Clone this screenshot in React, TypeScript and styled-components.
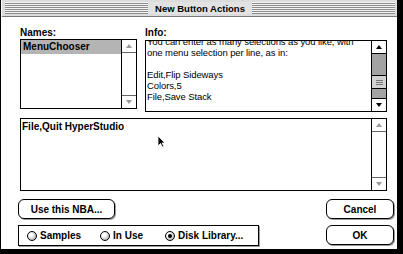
import React from 'react';
import styled, { createGlobalStyle } from 'styled-components';

const GlobalStyle = createGlobalStyle`
  html, body {
    margin: 0;
    padding: 0;
    background: #fff;
  }
  body {
    width: 403px;
    height: 254px;
    overflow: hidden;
    font-family: "Liberation Sans", Arial, sans-serif;
    color: #000;
  }
`;

const Screen = styled.div`
  position: relative;
  width: 403px;
  height: 254px;
  overflow: hidden;
  background: #fff;
`;

const Window = styled.div`
  box-sizing: border-box;
  width: 403px;
  height: 254px;
  border-left: 1px solid #000;
  border-right: 6px solid #000;
  border-bottom: 5px solid #000;
  background: #fff;
  display: flex;
  flex-direction: column;
`;

const TitleBar = styled.div`
  height: 17px;
  box-sizing: border-box;
  padding: 2px 2px 2px 3px;
  margin-left: 1px;
  background: #dcdcdc;
  border-bottom: 1px solid #7a7a7a;
  display: flex;
  align-items: stretch;
`;

const Stripes = styled.div`
  flex: 1;
  background: repeating-linear-gradient(
    to bottom,
    #f4f4f4 0 1px,
    #8c8c8c 1px 2px
  );
`;

const Title = styled.div`
  padding: 0 7px;
  font-size: 9.5px;
  font-weight: bold;
  line-height: 13px;
  background: #e2e2e2;
`;

const Body = styled.div`
  flex: 1;
  padding: 10px 0 0 19px;
  display: flex;
  flex-direction: column;
`;

const TopGrid = styled.div`
  display: grid;
  grid-template-columns: 117px 242px;
  column-gap: 8px;
  align-items: start;
`;

const Field = styled.div`
  display: flex;
  flex-direction: column;
`;

const Label = styled.div`
  height: 12px;
  font-size: 10px;
  font-weight: bold;
  line-height: 12px;
`;

const Box = styled.div<{ $h: number; $offset?: number }>`
  box-sizing: border-box;
  height: ${(p) => p.$h}px;
  margin-top: ${(p) => p.$offset ?? 0}px;
  border: 1px solid #000;
  display: flex;
  background: #fff;
`;

const WideBox = styled(Box)`
  width: 367px;
`;

const ListArea = styled.div`
  flex: 1;
  overflow: hidden;
`;

const SelectedItem = styled.div`
  height: 14px;
  padding-left: 2px;
  background: #b4b4b4;
  font-size: 10px;
  font-weight: bold;
  line-height: 14px;
`;

const InfoText = styled.div`
  flex: 1;
  overflow: hidden;
  padding-left: 1px;
`;

const InfoLines = styled.div`
  margin-top: -5px;
  font-size: 9.5px;
  line-height: 11px;
  letter-spacing: -0.1px;
  white-space: pre;
`;

const EntryText = styled.div`
  flex: 1;
  padding: 2px 0 0 1px;
  font-size: 10px;
  font-weight: bold;
  line-height: 12px;
`;

const Scrollbar = styled.div`
  width: 14px;
  border-left: 1px solid #000;
  display: flex;
  flex-direction: column;
`;

const ArrowBox = styled.div<{ $end: 'top' | 'bottom'; $active: boolean }>`
  height: 12px;
  display: flex;
  align-items: center;
  justify-content: center;
  background: #fff;
  ${(p) => (p.$end === 'top' ? 'border-bottom' : 'border-top')}: 1px solid
    ${(p) => (p.$active ? '#000' : '#666')};
`;

const Track = styled.div<{ $active: boolean }>`
  flex: 1;
  display: flex;
  flex-direction: column;
  background: ${(p) => (p.$active ? '#a3a3a3' : '#fff')};
`;

const Thumb = styled.div`
  margin-top: 21px;
  height: 12px;
  border-top: 1px solid #000;
  border-bottom: 1px solid #000;
  background: #d2d2d2;
  display: flex;
  flex-direction: column;
  justify-content: center;
  align-items: center;
  gap: 1px;
`;

const Grip = styled.div`
  width: 7px;
  height: 1px;
  background: #777;
`;

const BottomGrid = styled.div`
  margin: 8px 0 0 -2px;
  padding-right: 3px;
  display: grid;
  grid-template-columns: 241px 1fr 68px;
  grid-template-rows: 20px 21px;
  row-gap: 6px;
`;

const Button = styled.button<{ $w?: number }>`
  box-sizing: border-box;
  width: ${(p) => (p.$w ? `${p.$w}px` : '100%')};
  height: 20px;
  padding: 0;
  border: 1px solid #000;
  border-radius: 6px;
  background: #fff;
  box-shadow: 1px 1px 0 #9a9a9a;
  font-family: "Liberation Sans", Arial, sans-serif;
  font-size: 10px;
  font-weight: bold;
  color: #000;
`;

const RadioGroup = styled.div`
  box-sizing: border-box;
  grid-column: 1;
  height: 21px;
  border: 1px solid #000;
  box-shadow: 1px 1px 0 #9a9a9a;
  padding-left: 8px;
  display: grid;
  grid-template-columns: 73px 65px auto;
  align-items: center;
`;

const RadioItem = styled.div`
  display: flex;
  align-items: center;
  gap: 3px;
  font-size: 10px;
  font-weight: bold;
`;

const RadioDot = styled.span<{ $on: boolean }>`
  box-sizing: border-box;
  width: 10px;
  height: 10px;
  border-radius: 50%;
  border: 1px solid #000;
  background: radial-gradient(circle at 35% 35%, #fff 0 20%, #b8b8b8 75%);
  display: flex;
  align-items: center;
  justify-content: center;
  &::after {
    content: '';
    display: ${(p) => (p.$on ? 'block' : 'none')};
    width: 4px;
    height: 4px;
    border-radius: 50%;
    background: #000;
  }
`;

const Cursor = styled.svg`
  position: absolute;
  left: 157px;
  top: 135px;
`;

function Arrow({ dir, active }: { dir: 'up' | 'down'; active: boolean }) {
  const pts = dir === 'up' ? '1,5 4,1 7,5' : '1,1 4,5 7,1';
  return (
    <svg width="8" height="6" viewBox="0 0 8 6">
      <polygon points={pts} fill={active ? '#000' : '#9a9a9a'} />
    </svg>
  );
}

function ScrollBar({ active }: { active: boolean }) {
  return (
    <Scrollbar>
      <ArrowBox $end="top" $active={active}>
        <Arrow dir="up" active={active} />
      </ArrowBox>
      <Track $active={active}>
        {active && (
          <Thumb>
            <Grip />
            <Grip />
            <Grip />
          </Thumb>
        )}
      </Track>
      <ArrowBox $end="bottom" $active={active}>
        <Arrow dir="down" active={active} />
      </ArrowBox>
    </Scrollbar>
  );
}

const infoLines = [
  'You can enter as many selections as you like, with',
  'one menu selection per line, as in:',
  '',
  'Edit,Flip Sideways',
  'Colors,5',
  'File,Save Stack',
];

const radios = [
  { label: 'Samples', on: false },
  { label: 'In Use', on: false },
  { label: 'Disk Library...', on: true },
];

export default function App() {
  return (
    <Screen>
      <GlobalStyle />
      <Window>
        <TitleBar>
          <Stripes />
          <Title>New Button Actions</Title>
          <Stripes />
        </TitleBar>
        <Body>
          <TopGrid>
            <Field>
              <Label>Names:</Label>
              <Box $h={70}>
                <ListArea>
                  <SelectedItem>MenuChooser</SelectedItem>
                </ListArea>
                <ScrollBar active={false} />
              </Box>
            </Field>
            <Field>
              <Label>Info:</Label>
              <Box $h={72} $offset={1}>
                <InfoText>
                  <InfoLines>{infoLines.join('\n')}</InfoLines>
                </InfoText>
                <ScrollBar active />
              </Box>
            </Field>
          </TopGrid>
          <WideBox $h={73} $offset={6}>
            <EntryText>File,Quit HyperStudio</EntryText>
            <ScrollBar active={false} />
          </WideBox>
          <BottomGrid>
            <Button $w={97}>Use this NBA...</Button>
            <span />
            <Button>Cancel</Button>
            <RadioGroup>
              {radios.map((r) => (
                <RadioItem key={r.label}>
                  <RadioDot $on={r.on} />
                  {r.label}
                </RadioItem>
              ))}
            </RadioGroup>
            <span />
            <Button>OK</Button>
          </BottomGrid>
        </Body>
      </Window>
      <Cursor width="9" height="13" viewBox="0 0 9 13">
        <polygon points="1,1 1,11 3.5,8.5 5.5,12 7,11.3 5,8 8,8" fill="#000" stroke="#fff" strokeWidth="0.8" />
      </Cursor>
    </Screen>
  );
}
